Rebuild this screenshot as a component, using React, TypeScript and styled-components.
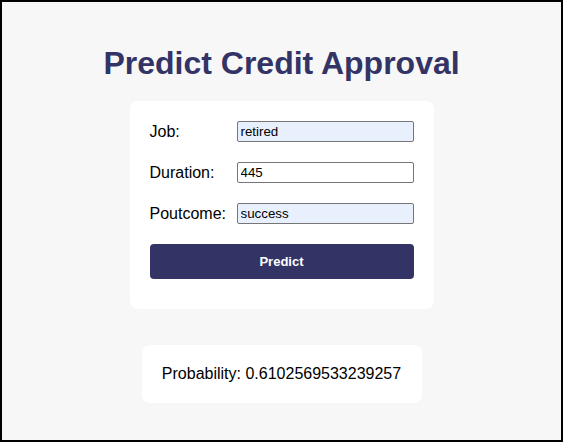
import React from "react";
import styled, { createGlobalStyle } from "styled-components";

const Global = createGlobalStyle`
  html, body { margin: 0; padding: 0; }
  body { font-family: "Liberation Sans", Arial, sans-serif; background: #f7f7f7; }
  * { box-sizing: border-box; }
`;

const Page = styled.div`
  height: 442px;
  border: 2px solid #000;
  background: #f7f7f7;
  display: flex;
  flex-direction: column;
  align-items: center;
  padding-top: 43px;
`;

const Title = styled.h1`
  margin: 0 0 19px;
  font-size: 32px;
  font-weight: bold;
  color: #333366;
  line-height: 37px;
`;

const Card = styled.form`
  width: 304px;
  background: #fff;
  border-radius: 8px;
  padding: 20px 20px 30px;
  display: flex;
  flex-direction: column;
  gap: 20px;
`;

const Row = styled.div`
  display: flex;
  align-items: center;
`;

const Label = styled.label`
  flex: 0 0 87px;
  font-size: 16px;
  color: #000;
`;

const Input = styled.input<{ $filled?: boolean }>`
  flex: 1;
  min-width: 0;
  height: 21px;
  border: 1px solid #767676;
  border-radius: 2px;
  padding: 1px 3px;
  font-family: "Liberation Sans", Arial, sans-serif;
  font-size: 13.33px;
  color: #000;
  background: ${(p) => (p.$filled ? "#e8f0fe" : "#fff")};
`;

const Button = styled.button`
  height: 35px;
  border: none;
  border-radius: 4px;
  background: #333366;
  color: #fff;
  font-family: "Liberation Sans", Arial, sans-serif;
  font-size: 13px;
  font-weight: bold;
  padding: 0;
`;

const Result = styled.div`
  margin-top: 36px;
  width: 280px;
  height: 58px;
  background: #fff;
  border-radius: 8px;
  display: flex;
  align-items: center;
  justify-content: center;
  font-size: 16px;
  color: #000;
`;

export default function App() {
  return (
    <>
      <Global />
      <Page>
        <Title>Predict Credit Approval</Title>
        <Card onSubmit={(e) => e.preventDefault()}>
          <Row>
            <Label>Job:</Label>
            <Input $filled defaultValue="retired" />
          </Row>
          <Row>
            <Label>Duration:</Label>
            <Input defaultValue="445" />
          </Row>
          <Row>
            <Label>Poutcome:</Label>
            <Input $filled defaultValue="success" />
          </Row>
          <Button type="submit">Predict</Button>
        </Card>
        <Result>Probability: 0.6102569533239257</Result>
      </Page>
    </>
  );
}
